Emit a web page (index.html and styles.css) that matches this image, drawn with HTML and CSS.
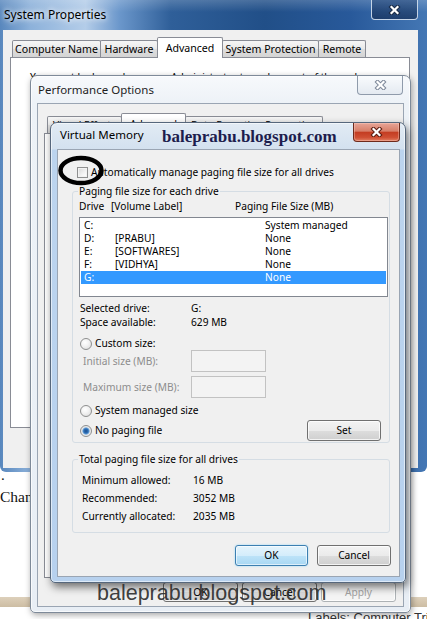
FILE: index.html
```html
<!DOCTYPE html>
<html>
<head>
<meta charset="utf-8">
<title>Virtual Memory</title>
<link rel="stylesheet" href="styles.css">
</head>
<body>
<div class="page">
  <div class="page-spacer"></div>
  <p class="page-dot">.</p>
  <p class="page-text">Change</p>
  <div class="page-band"></div>
  <p class="page-labels">Labels: Computer Tricks</p>
</div>

<section class="win win-sys">
  <header class="titlebar sys-titlebar">
    <span class="title sys-title">System Properties</span>
    <span class="close close-sys"><svg class="xmark" viewBox="0 0 13 10"><path class="x-out" d="M3.5 2 L9.5 8 M9.5 2 L3.5 8"/><path class="x-in" d="M3.5 2 L9.5 8 M9.5 2 L3.5 8"/></svg></span>
  </header>
  <div class="client-plain sys-client">
    <div class="tabs sys-tabs">
      <span class="tab st-1">Computer Name</span>
      <span class="tab st-2">Hardware</span>
      <span class="tab tab-on st-3">Advanced</span>
      <span class="tab st-4">System Protection</span>
      <span class="tab st-5">Remote</span>
    </div>
    <div class="tabpanel sys-panel">
      <p class="sys-note">You must be logged on as an Administrator to make most of these changes.</p>
    </div>
  </div>
</section>

<section class="win win-perf">
  <header class="titlebar perf-titlebar">
    <span class="title perf-title">Performance Options</span>
    <span class="close close-perf"><svg class="xmark" viewBox="0 0 13 10"><path class="x-out" d="M3.5 2 L9.5 8 M9.5 2 L3.5 8"/><path class="x-in" d="M3.5 2 L9.5 8 M9.5 2 L3.5 8"/></svg></span>
  </header>
  <div class="client perf-client">
    <div class="tabs perf-tabs">
      <span class="tab pt-1">Visual Effects</span>
      <span class="tab tab-on pt-2">Advanced</span>
      <span class="tab pt-3">Data Execution Prevention</span>
    </div>
    <div class="tabpanel perf-panel"></div>
    <div class="btnrow perf-btns">
      <span class="btn pb">OK</span>
      <span class="btn pb">Cancel</span>
      <span class="btn pb btn-disabled">Apply</span>
    </div>
  </div>
</section>

<section class="win win-vm">
  <header class="titlebar vm-titlebar">
    <span class="title vm-title">Virtual Memory</span>
    <span class="close close-vm"><svg class="xmark" viewBox="0 0 13 10"><path class="x-out" d="M3.5 2 L9.5 8 M9.5 2 L3.5 8"/><path class="x-in" d="M3.5 2 L9.5 8 M9.5 2 L3.5 8"/></svg></span>
  </header>
  <div class="client vm-client">
    <div class="auto-row"><span class="check"></span><span>Automatically manage paging file size for all drives</span></div>

    <fieldset class="group group-drives">
      <legend>Paging file size for each drive</legend>
      <div class="listhead"><span class="h-drive">Drive</span><span class="h-label">[Volume Label]</span><span>Paging File Size (MB)</span></div>
      <div class="listbox">
        <div class="lrow"><span class="c-drive">C:</span><span class="c-label"></span><span>System managed</span></div>
        <div class="lrow"><span class="c-drive">D:</span><span class="c-label">[PRABU]</span><span>None</span></div>
        <div class="lrow"><span class="c-drive">E:</span><span class="c-label">[SOFTWARES]</span><span>None</span></div>
        <div class="lrow"><span class="c-drive">F:</span><span class="c-label">[VIDHYA]</span><span>None</span></div>
        <div class="lrow lrow-sel"><span class="c-drive">G:</span><span class="c-label"></span><span>None</span></div>
      </div>
      <div class="info info-first"><span class="info-k">Selected drive:</span><span>G:</span></div>
      <div class="info"><span class="info-k">Space available:</span><span>629 MB</span></div>
      <div class="radio-row r-custom"><span class="radio"></span><span>Custom size:</span></div>
      <div class="size-row"><span class="size-k">Initial size (MB):</span><span class="field"></span></div>
      <div class="size-row size-row-2"><span class="size-k">Maximum size (MB):</span><span class="field"></span></div>
      <div class="radio-row r-system"><span class="radio"></span><span>System managed size</span></div>
      <div class="radio-row r-none"><span class="radio radio-on"></span><span>No paging file</span><span class="btn btn-set">Set</span></div>
    </fieldset>

    <fieldset class="group group-total">
      <legend>Total paging file size for all drives</legend>
      <div class="trow"><span class="t-k">Minimum allowed:</span><span>16 MB</span></div>
      <div class="trow"><span class="t-k">Recommended:</span><span>3052 MB</span></div>
      <div class="trow"><span class="t-k">Currently allocated:</span><span>2035 MB</span></div>
    </fieldset>

    <div class="btnrow vm-btns">
      <span class="btn btn-default vb">OK</span>
      <span class="btn vb vb-cancel">Cancel</span>
    </div>
  </div>
</section>

<span class="wm-title">baleprabu.blogspot.com</span>
<svg class="ring" viewBox="0 0 52 36"><ellipse cx="26" cy="17.5" rx="20.5" ry="12.5" fill="none" stroke="#000" stroke-width="4.5"/></svg>
<span class="wm-bottom">baleprabu.blogspot.com</span>
</body>
</html>
```
FILE: styles.css
```css
* { box-sizing: border-box; }
html, body { margin: 0; padding: 0; }
body {
  width: 427px;
  height: 619px;
  overflow: hidden;
  position: relative;
  background: #fff;
  color: #000;
  font-family: "Noto Sans", "Open Sans", sans-serif;
  font-size: 10.2px;
  line-height: 13px;
}
p { margin: 0; }

/* web page behind the dialogs */
.page { height: 619px; display: flex; flex-direction: column; font-family: "Liberation Serif", serif; color: #111; }
.page-spacer { flex: none; height: 468px; }
.page-dot { font-size: 15px; line-height: 14px; padding-left: 1px; }
.page-text { font-size: 15.5px; line-height: 20px; margin-top: 5px; }
.page-band { flex: none; height: 10px; margin-top: 90px; background: linear-gradient(#ddd0bb, #cdbda3); }
.page-labels { margin-top: 3px; padding-left: 308px; font-family: "Liberation Sans", sans-serif; font-size: 13px; line-height: 15px; color: #333; white-space: nowrap; }

/* windows */
.win { position: absolute; display: flex; flex-direction: column; }
.titlebar { flex: none; display: flex; align-items: flex-start; }
.title { font-size: 11.5px; line-height: 16px; white-space: nowrap; }
.close { flex: none; margin-left: auto; display: flex; align-items: center; justify-content: center; border-radius: 0 0 4px 4px; }
.xmark { width: 13px; height: 10px; display: block; }
.xmark path { fill: none; stroke-linecap: square; }
.x-out { stroke: #333; stroke-width: 4.2; }
.x-in { stroke: #fff; stroke-width: 2.2; }

/* System Properties */
.win-sys {
  z-index: 1;
  left: 0; top: 0; width: 427px; height: 472px;
  border-radius: 0 0 6px 6px;
  background:
    linear-gradient(180deg, rgba(255,255,255,.18) 0, rgba(255,255,255,0) 12px),
    linear-gradient(90deg, #5887bd 0, #8cb1da 7%, #b4cde9 20%, #6b97cb 28%, #2f5f99 40%, #214f88 62%, #28599a 82%, #4477b4 100%);
}
.sys-titlebar { height: 30px; padding: 0 9px 0 4px; }
.sys-title { margin-top: 7px; font-size: 12px; text-shadow: 0 0 5px #fff, 0 0 8px #fff; }
.close-sys { width: 47px; height: 20px; border: 1px solid rgba(225,235,248,.85); border-top: 0; background: linear-gradient(rgba(40,70,115,.5), rgba(20,45,85,.7)); }
.close-sys .x-out { stroke: #1a2c47; }
.client-plain { flex: none; display: flex; flex-direction: column; background: #f0f0f0; }
.sys-client { height: 438px; margin: 0 9px 0 3px; }
.sys-tabs { padding: 7px 0 0 10px; font-size: 10.6px; }

.tabs { flex: none; display: flex; align-items: flex-end; position: relative; z-index: 1; }
.tab {
  flex: none; height: 17px; margin-left: -1px;
  border: 1px solid #898c95; border-bottom: 0; border-radius: 2px 2px 0 0;
  background: linear-gradient(#f6f6f6, #e9e9e9 50%, #dedede 50%, #d4d4d4);
  display: flex; align-items: center; justify-content: center;
  white-space: nowrap; overflow: hidden;
}
.tab-on { height: 21px; margin-bottom: -1px; background: #fff; position: relative; z-index: 1; }
.st-1 { width: 89px; }
.st-2 { width: 58px; }
.st-3 { width: 66px; }
.st-4 { width: 97px; }
.st-5 { width: 48px; }
.pt-1 { width: 75px; }
.pt-2 { width: 65px; }
.pt-3 { width: 138px; }
.tabpanel { flex: none; background: #fff; border: 1px solid #898c95; }
.sys-panel { margin-left: 7px; width: 400px; height: 371px; padding: 13px 0 0 19px; }
.sys-note { white-space: nowrap; }

/* Performance Options */
.win-perf {
  z-index: 2;
  left: 30px; top: 75px; width: 381px; height: 538px;
  padding: 0 6px 5px;
  border: 1px solid #7e8a99; border-radius: 7px 7px 5px 5px;
  background: linear-gradient(180deg, #f7f9fc 0, #edf2f7 27px, #e8eef5 100%);
  box-shadow: 1px 2px 6px rgba(0,0,0,.35), inset 0 0 0 1px rgba(255,255,255,.7);
}
.perf-titlebar { height: 27px; padding: 0 1px; }
.perf-title { margin-top: 6px; color: #1e1e1e; }
.close-perf { width: 46px; height: 19px; border: 1px solid #8f9bab; border-top: 0; background: linear-gradient(#f9fbfd, #e4eaf1); }
.close-perf .x-out { stroke: #7d8899; }
.client { flex: none; display: flex; flex-direction: column; background: #f0f0f0; border: 1px solid #9aa5b3; overflow: hidden; }
.perf-client { height: 504px; }
.perf-tabs { padding: 9px 0 0 10px; }
.perf-panel { margin-left: 6px; width: 353px; height: 445px; }
.btnrow { flex: none; display: flex; justify-content: flex-end; }
.perf-btns { margin-top: 4px; padding-right: 7px; gap: 4px; }
.pb { width: 75px; height: 20px; }

/* Virtual Memory */
.win-vm {
  z-index: 3;
  left: 50px; top: 122px; width: 356px; height: 461px;
  padding: 0 5px 5px 6px;
  border: 1px solid #56677c; border-radius: 7px 7px 5px 5px;
  background: linear-gradient(180deg, #e2ebf4 0, #d3e1ef 26px, #bcd4ee 27px, #b7d1ee 100%);
  box-shadow: 2px 4px 9px rgba(0,0,0,.55), inset 0 0 0 1px rgba(255,255,255,.55);
}
.vm-titlebar { height: 26px; padding-left: 3px; }
.vm-title { margin-top: 5px; line-height: 14px; }
.close-vm {
  width: 47px; height: 19px;
  border: 1px solid #6e2a1c; border-top: 0;
  background: linear-gradient(180deg, #e7a597 0, #d77f69 45%, #c43d22 52%, #cf4f33 80%, #e27f62 100%);
  box-shadow: inset 0 0 0 1px rgba(255,220,210,.35);
}
.close-vm .x-out { stroke: #5a1b10; }
.vm-client { height: 428px; }

.auto-row { flex: none; margin-top: 16px; padding-left: 19px; height: 13px; display: flex; align-items: center; gap: 3px; white-space: nowrap; }
.check { flex: none; width: 11px; height: 11px; border: 1px solid #8e8f8f; background: linear-gradient(135deg, #d7d7d7, #f7f7f7 70%, #fff); box-shadow: inset 0 0 0 1px #f2f2f2; }

.group { flex: none; margin: 0 0 0 14px; width: 318px; min-width: 0; border: 1px solid #d5dde4; border-radius: 3px; }
.group legend { padding: 0 1px; line-height: 13px; white-space: nowrap; }
.group-drives { margin-top: 6px; padding: 2px 1px 1px 6px; }
.group-drives legend { margin-left: -1px; }
.group-total { margin-top: 10px; padding: 5px 0 7px 9px; }
.group-total legend { margin-left: -4px; }

.listhead { display: flex; height: 13px; white-space: nowrap; }
.h-drive { width: 32px; }
.h-label { width: 124px; }
.listbox { margin-top: 4px; width: 309px; height: 80px; border: 1px solid #828790; background: #fff; padding: 1px; }
.lrow { display: flex; height: 13px; padding-left: 3px; white-space: nowrap; }
.lrow-sel { background: #3399ff; color: #fff; }
.c-drive { width: 31px; }
.c-label { width: 150px; }

.info { display: flex; height: 14px; line-height: 14px; padding-left: 1px; white-space: nowrap; }
.info-first { margin-top: 4px; }
.info-k { width: 111px; }

.radio-row { display: flex; align-items: center; height: 13px; padding-left: 1px; gap: 3px; white-space: nowrap; }
.r-custom { margin-top: 8px; }
.r-system { margin-top: 6px; }
.r-none { margin-top: 3px; height: 21px; }
.radio { flex: none; width: 12px; height: 12px; border-radius: 50%; border: 1px solid #8e8f8f; background: radial-gradient(circle at 40% 35%, #fff 0, #f3f3f3 40%, #d8d8d8 100%); }
.radio-on { background: radial-gradient(circle at 50% 50%, #1c4e8e 0, #2f6fb5 2.2px, #6ea6dc 3.2px, #e8e8e8 4px, #f3f3f3 100%); }

.size-row { display: flex; align-items: center; height: 22px; padding-left: 4px; color: #8d8d8d; white-space: nowrap; }
.size-row-2 { margin-top: 4px; }
.size-k { width: 108px; }
.field { flex: none; width: 75px; height: 22px; border: 1px solid #c2c2c2; background: #f3f3f3; }

.btn {
  flex: none; display: flex; align-items: center; justify-content: center;
  border: 1px solid #707070; border-radius: 3px;
  background: linear-gradient(#f3f3f3 0, #ebebeb 50%, #dddddd 51%, #cfcfcf 100%);
  box-shadow: inset 0 0 0 1px rgba(255,255,255,.75);
  white-space: nowrap;
}
.btn-set { margin-left: auto; margin-right: 7px; width: 74px; height: 21px; }
.btn-default {
  border-color: #3c7fb1;
  background: linear-gradient(#e5f4fc 0, #d4edfb 50%, #bde3f8 51%, #a8d7f3 100%);
  box-shadow: inset 0 0 0 1px rgba(255,255,255,.6), 0 0 2px #8fd3f5;
}
.btn-disabled { color: #a3a3a3; border-color: #adb2b5; background: #f4f4f4; }

.trow { display: flex; height: 18px; line-height: 18px; white-space: nowrap; }
.t-k { width: 111px; }

.vm-btns { margin-top: 12px; padding-right: 8px; gap: 9px; }
.vb { width: 73px; height: 21px; }
.vb-cancel { width: 74px; }

/* overlays drawn on top of the screenshot */
.wm-title { position: absolute; z-index: 4; left: 162px; top: 128px; font-family: "Liberation Serif", serif; font-weight: bold; font-size: 17px; line-height: 17px; color: #1d1d4d; white-space: nowrap; }
.ring { position: absolute; z-index: 4; left: 55px; top: 153px; width: 52px; height: 36px; }
.wm-bottom { position: absolute; z-index: 4; left: 97px; top: 582px; font-family: "Liberation Sans", sans-serif; font-size: 21.5px; line-height: 22px; color: rgba(45,45,45,.92); white-space: nowrap; }
```
